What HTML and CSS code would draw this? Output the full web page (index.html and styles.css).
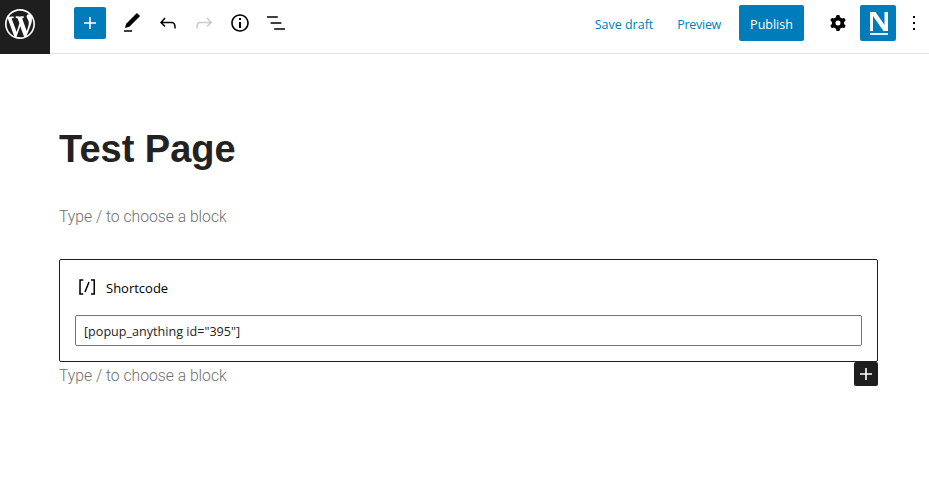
FILE: index.html
```html
<!DOCTYPE html>
<html lang="en">

<head>
    <meta charset="UTF-8">
    <meta name="viewport" content="width=device-width, initial-scale=1.0">
    <title>Test Page</title>
    <link rel="stylesheet" href="styles.css">
</head>

<body>
    <!-- top bar -->
    <header class="bar">
        <a class="logo">
            <svg width="30" height="30" viewBox="0 0 20 20"><path fill="#fff" d="M20 10c0-5.51-4.49-10-10-10C4.48 0 0 4.49 0 10c0 5.52 4.48 10 10 10 5.51 0 10-4.48 10-10zM7.78 15.37L4.37 6.22c.55-.02 1.17-.08 1.17-.08.5-.06.44-1.13-.06-1.11 0 0-1.45.11-2.37.11-.18 0-.37 0-.58-.01C4.12 2.69 6.87 1.11 10 1.11c2.33 0 4.45.87 6.05 2.34-.68-.11-1.65.39-1.65 1.58 0 .74.45 1.36.9 2.1.35.61.55 1.36.55 2.46 0 1.49-1.4 5-1.4 5l-3.03-8.37c.54-.02.82-.17.82-.17.5-.05.44-1.25-.06-1.22 0 0-1.44.12-2.38.12-.87 0-2.33-.12-2.33-.12-.5-.03-.56 1.2-.06 1.22l.92.08 1.26 3.41zM17.41 10c.24-.64.74-1.87.43-4.25.7 1.29 1.05 2.71 1.05 4.25 0 3.29-1.73 6.24-4.4 7.78.97-2.59 1.94-5.2 2.92-7.78zM6.1 18.09C3.12 16.65 1.11 13.53 1.11 10c0-1.3.23-2.48.72-3.59C3.25 10.3 4.67 14.2 6.1 18.09zm4.03-6.63l2.58 6.98c-.86.29-1.76.45-2.71.45-.79 0-1.57-.11-2.29-.33.81-2.38 1.62-4.74 2.42-7.1z"/></svg>
        </a>
        <div class="tools">
            <button class="inserter">
                <svg width="24" height="24" viewBox="0 0 24 24"><path fill="#fff" d="M18 11.2h-5.2V6h-1.6v5.2H6v1.6h5.2V18h1.6v-5.2H18z"/></svg>
            </button>
            <span class="tool"><svg width="24" height="24" viewBox="0 0 24 24"><path d="M20.1 5.1L16.9 2 6.2 12.7l-1.3 4.4 4.5-1.3L20.1 5.1zM4 20.8h8v-1.5H4v1.5z"/></svg></span>
            <span class="tool"><svg width="24" height="24" viewBox="0 0 24 24"><path d="M18.3 11.7c-.6-.6-1.4-.9-2.3-.9H6.7l2.9-3.3-1.1-1-4.5 5L8.5 16l1-1-2.7-2.7H16c.5 0 .9.2 1.3.5 1 1 1 3.4 1 4.5v.3h1.5v-.2c0-1.5 0-4.3-1.5-5.7z"/></svg></span>
            <span class="tool off"><svg width="24" height="24" viewBox="0 0 24 24"><path d="M15.6 6.5l-1.1 1 2.9 3.3H8c-.9 0-1.7.3-2.3.9-1.4 1.5-1.4 4.2-1.4 5.6v.2h1.5v-.3c0-1.1 0-3.5 1-4.5.3-.3.7-.5 1.3-.5h9.2L14.5 15l1.1 1.1 4.6-4.6-4.6-5z"/></svg></span>
            <span class="tool"><svg width="24" height="24" viewBox="0 0 24 24"><path d="M12 3.2c-4.8 0-8.8 3.9-8.8 8.8 0 4.8 3.9 8.8 8.8 8.8 4.8 0 8.8-3.9 8.8-8.8 0-4.8-4-8.8-8.8-8.8zm0 16c-4 0-7.2-3.3-7.2-7.2C4.8 8 8 4.8 12 4.8s7.2 3.3 7.2 7.2c0 4-3.2 7.2-7.2 7.2zM11 17h2v-6h-2v6zm0-8h2V7h-2v2z"/></svg></span>
            <span class="tool"><svg width="24" height="24" viewBox="0 0 24 24"><path d="M13.8 5.2H3v1.5h10.8V5.2zm-3.6 12v1.5H21v-1.5H10.2zm7.2-6H6.6v1.5h10.8v-1.5z"/></svg></span>
        </div>
        <div class="actions">
            <a class="link save">Save draft</a>
            <a class="link preview">Preview</a>
            <button class="publish">Publish</button>
            <span class="cog"><svg width="24" height="24" viewBox="0 0 24 24"><path fill-rule="evenodd" d="M10.289 4.836A1 1 0 0 1 11.275 4h1.450a1 1 0 0 1 .986.836l.244 1.466c.787.246 1.503.666 2.103 1.218l1.392-.522a1 1 0 0 1 1.220.436l.725 1.256a1 1 0 0 1-.240 1.280l-1.148.945a6.030 6.030 0 0 1 0 2.170l1.148.945a1 1 0 0 1 .240 1.280l-.725 1.256a1 1 0 0 1-1.220.436l-1.392-.522a6 6 0 0 1-2.103 1.218l-.244 1.466a1 1 0 0 1-.986.836h-1.450a1 1 0 0 1-.986-.836l-.244-1.466a6 6 0 0 1-2.103-1.218l-1.392.522a1 1 0 0 1-1.220-.436l-.725-1.256a1 1 0 0 1 .240-1.280l1.148-.945a6.030 6.030 0 0 1 0-2.170l-1.148-.945a1 1 0 0 1-.240-1.280l.725-1.256a1 1 0 0 1 1.220-.436l1.392.522a6 6 0 0 1 2.103-1.218l.244-1.466zM14.500 12a2.500 2.500 0 1 1-5 0 2.500 2.500 0 0 1 5 0z"/></svg></span>
            <span class="brand">
                <svg width="36" height="36" viewBox="0 0 36 36"><polygon fill="#fff" points="10,7 15.500,7 24.500,20 24.500,7 28,7 28,26 23.500,26 13,11 13,26 10,26"/><rect fill="#e6f1f7" x="10" y="28" width="18" height="2"/></svg>
            </span>
            <span class="more"><svg width="24" height="24" viewBox="0 0 24 24"><path d="M13 19h-2v-2h2v2zm0-6h-2v-2h2v2zm0-6h-2V5h2v2z"/></svg></span>
        </div>
    </header>

    <!-- editor canvas -->
    <main class="canvas">
        <h1 class="title">Test Page</h1>
        <p class="hint first">Type / to choose a block</p>
        <div class="block">
            <div class="block-label">
                <svg width="24" height="24" viewBox="0 0 24 24"><path d="M16 4.200v1.500h2.500v12.500H16v1.500h4V4.200h-4zM4.200 19.800h4v-1.500H5.800V5.800h2.500V4.200h-4l-.1 15.600zm5.100-3.100l1.400.6 4-10-1.400-.6-4 10z"/></svg>
                <span>Shortcode</span>
            </div>
            <input class="code" type="text" value='[popup_anything id="395"]'>
            <button class="add">
                <svg width="24" height="24" viewBox="0 0 24 24"><path fill="#fff" d="M18 11.200h-5.200V6h-1.600v5.200H6v1.600h5.200V18h1.600v-5.200H18z"/></svg>
            </button>
        </div>
        <p class="hint">Type / to choose a block</p>
    </main>
</body>

</html>
```

FILE: styles.css
```css
html, body {
    margin: 0;
    padding: 0;
    background: #fff;
    color: #1e1e1e;
    overflow: hidden;
}
button {
    border: 0;
    padding: 0;
    margin: 0;
}
svg {
    display: block;
}

/* top bar */
.bar {
    display: flex;
    align-items: center;
    height: 46px;
    padding-bottom: 7px;
    border-bottom: 1px solid #e0e0e0;
    font-family: "Open Sans", "Noto Sans", sans-serif;
    font-size: 12.5px;
}
.logo {
    box-sizing: border-box;
    width: 50px;
    height: 54px;
    padding: 9px 0 0 5px;
    background: #1e1e1e;
    align-self: flex-start;
    flex: none;
}
.tools {
    display: flex;
    align-items: center;
    margin-left: 24px;
    gap: 12px;
}
.inserter {
    width: 32px;
    height: 32px;
    background: #007cba;
    border-radius: 2px;
    display: flex;
    align-items: center;
    justify-content: center;
    margin-right: 2px;
}
.tool {
    display: block;
    width: 24px;
    height: 24px;
}
.tool.off {
    opacity: .2;
}
.actions {
    display: flex;
    align-items: center;
    margin-left: auto;
}
.link {
    color: #007cba;
    padding-top: 2px;
}
.save {
    margin-right: 24px;
}
.preview {
    margin-right: 18px;
    letter-spacing: -.3px;
}
.publish {
    width: 65px;
    height: 36px;
    padding-top: 2px;
    background: #007cba;
    color: #fff;
    border-radius: 2px;
    font: inherit;
    margin-right: 22px;
}
.cog {
    width: 24px;
    height: 24px;
    margin-right: 10px;
}
.brand {
    width: 36px;
    height: 36px;
    background: #007cba;
    border-radius: 2px;
}
.more {
    width: 24px;
    height: 24px;
    margin-left: 6px;
    margin-right: 3px;
}

/* canvas */
.canvas {
    width: 819px;
    margin-left: 59px;
    font-family: "Liberation Sans", Arial, sans-serif;
}
.title {
    margin: 0;
    padding-top: 71px;
    font-size: 38px;
    line-height: 48px;
    font-weight: 700;
    color: #222;
}
.hint {
    margin: 0;
    font-family: Roboto, "Liberation Sans", sans-serif;
    font-size: 15.7px;
    line-height: 20px;
    color: #6f6f6f;
    font-weight: 300;
}
.hint.first {
    margin-top: 34px;
    margin-bottom: 32px;
}
.block {
    position: relative;
    box-sizing: border-box;
    height: 103px;
    border: 1px solid #1e1e1e;
    border-radius: 2px;
    padding: 15px;
    margin-bottom: 4px;
}
.block-label {
    display: flex;
    align-items: center;
    height: 24px;
    margin-bottom: 16px;
    font-family: "Open Sans", "Noto Sans", sans-serif;
    font-size: 13px;
    color: #000;
    gap: 7px;
}
.block-label span {
    padding-top: 2px;
}
.code {
    display: block;
    box-sizing: border-box;
    width: 787px;
    height: 31px;
    border: 1px solid #757575;
    border-radius: 2px;
    padding: 1px 8px 0;
    margin: 0;
    font-family: "Open Sans", "Noto Sans", sans-serif;
    font-size: 12.6px;
    color: #1e1e1e;
    outline: 0;
}
/* sits on the corner of the block */
.add {
    position: absolute;
    right: -1px;
    bottom: -25px;
    width: 24px;
    height: 24px;
    background: #1e1e1e;
    border-radius: 2px;
}
```
